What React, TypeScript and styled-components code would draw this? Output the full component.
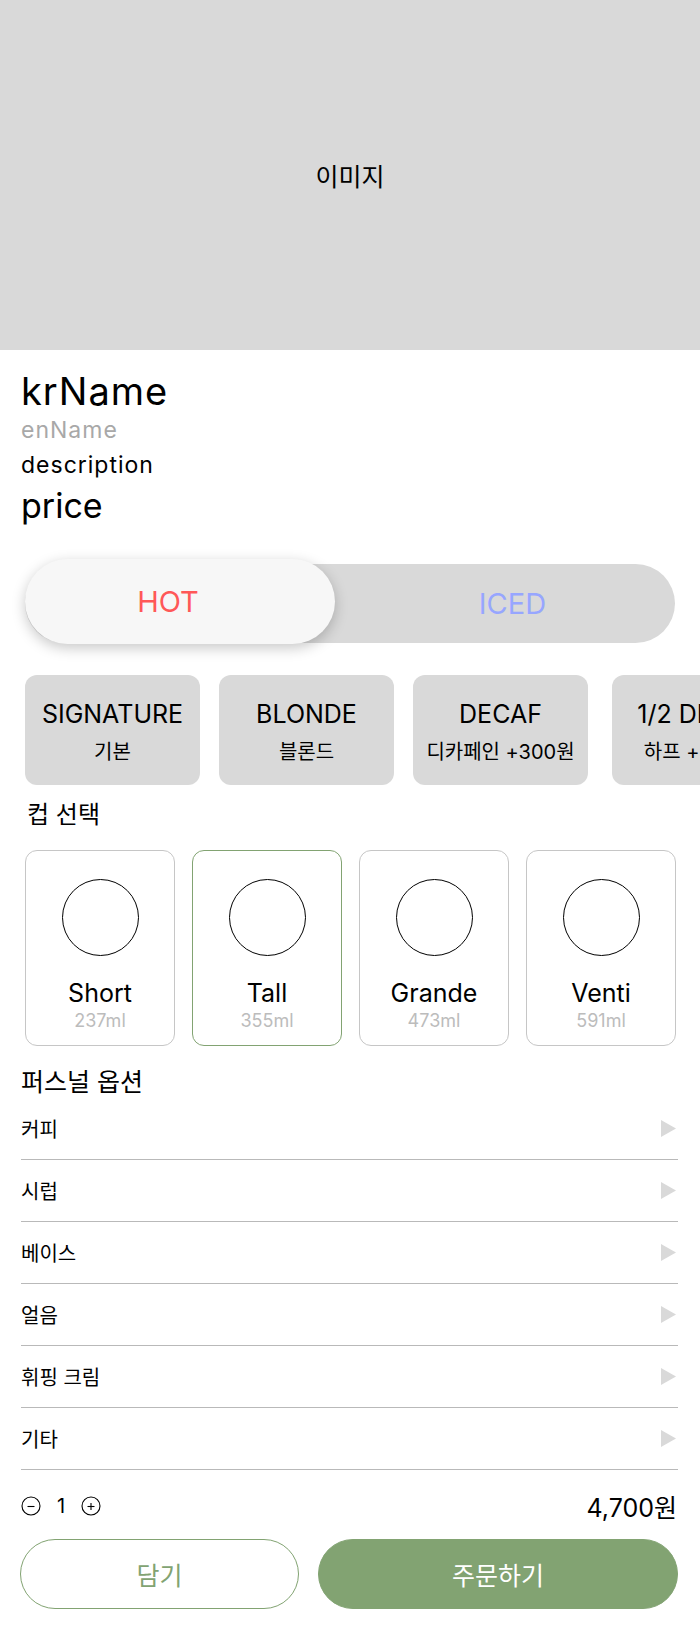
import React from 'react';
import styled, { createGlobalStyle } from 'styled-components';

const GlobalStyle = createGlobalStyle`
  html, body { margin: 0; padding: 0; background: #fff; }
  body {
    font-family: Inter, "Noto Sans CJK KR", sans-serif;
    color: #000;
  }
  * { box-sizing: border-box; }
`;

const Page = styled.div`
  width: 700px;
  padding-bottom: 20px;
  overflow: hidden;
`;

const Hero = styled.div`
  height: 350px;
  background: #d9d9d9;
  display: flex;
  align-items: center;
  justify-content: center;
  font-size: 25px;
`;

const Info = styled.section`
  padding: 19px 21px 0;
  display: flex;
  flex-direction: column;
`;

const KrName = styled.h1`
  margin: 0;
  font-size: 38px;
  font-weight: 400;
  line-height: 44px;
  letter-spacing: 1px;
`;

const EnName = styled.div`
  margin-top: 4px;
  font-size: 23px;
  line-height: 26px;
  letter-spacing: 1px;
  color: #a8a8a8;
`;

const Description = styled.p`
  margin: 9px 0 0;
  font-size: 23px;
  line-height: 26px;
  letter-spacing: 1px;
`;

const Price = styled.div`
  margin-top: 8px;
  font-size: 34px;
  line-height: 40px;
`;

const ToggleWrap = styled.div`
  margin: 33px 25px 0;
  padding-top: 5px;
`;

const Track = styled.div`
  position: relative;
  height: 79px;
  border-radius: 40px;
  background: #d9d9d9;
  display: grid;
  grid-template-columns: 1fr 1fr;
  align-items: center;
`;

const TrackLabel = styled.span<{ $color: string }>`
  grid-column: 2;
  text-align: center;
  font-size: 29px;
  color: ${(p) => p.$color};
`;

const Knob = styled.div`
  position: absolute;
  left: 0;
  top: -5px;
  width: 310px;
  height: 85px;
  border-radius: 43px;
  background: #f7f7f7;
  box-shadow: 0 4px 14px rgba(0, 0, 0, 0.22);
  display: flex;
  align-items: center;
  justify-content: center;
  padding-right: 24px;
  font-size: 29px;
  color: #ff5858;
`;

const BeanRow = styled.div`
  margin-top: 32px;
  padding-left: 25px;
  display: flex;
  gap: 19px;
`;

const Bean = styled.div<{ $shift?: number }>`
  flex: 0 0 175px;
  height: 110px;
  margin-left: ${(p) => p.$shift ?? 0}px;
  padding-top: 4px;
  border-radius: 12px;
  background: #d9d9d9;
  display: flex;
  flex-direction: column;
  align-items: center;
  justify-content: center;
  gap: 12px;
  white-space: nowrap;
`;

const BeanTitle = styled.span`
  font-size: 25px;
  line-height: 28px;
`;

const BeanSub = styled.span`
  font-size: 20px;
  line-height: 24px;
`;

const SectionTitle = styled.h2<{ $indent: number; $top: number; $size: number }>`
  margin: ${(p) => p.$top}px 0 0 ${(p) => p.$indent}px;
  font-size: ${(p) => p.$size}px;
  font-weight: 400;
  line-height: 26px;
`;

const CupGrid = styled.div`
  margin: 22px 24px 0 25px;
  display: grid;
  grid-template-columns: repeat(4, 150px);
  gap: 17px;
`;

const Cup = styled.div<{ $selected?: boolean }>`
  height: 196px;
  border: 1px solid ${(p) => (p.$selected ? '#82a372' : '#c6c6c6')};
  border-radius: 12px;
  padding-top: 28px;
  display: flex;
  flex-direction: column;
  align-items: center;
`;

const CupCircle = styled.div`
  width: 77px;
  height: 77px;
  border: 1px solid #000;
  border-radius: 50%;
`;

const CupName = styled.span`
  margin-top: 23px;
  font-size: 25px;
  line-height: 28px;
`;

const CupVolume = styled.span`
  margin-top: 3px;
  font-size: 18px;
  line-height: 22px;
  color: #bcbcbc;
`;

const OptionList = styled.ul`
  list-style: none;
  margin: 3px 22px 0 21px;
  padding: 0;
`;

const OptionRow = styled.li`
  height: 62px;
  border-bottom: 1px solid #b9b9b9;
  display: flex;
  align-items: center;
  justify-content: space-between;
  padding-right: 2px;
  font-size: 20px;
`;

const QtyRow = styled.div`
  margin: 21px 23px 0 21px;
  height: 30px;
  display: flex;
  align-items: center;
  justify-content: space-between;
`;

const Stepper = styled.div`
  display: flex;
  align-items: center;
  gap: 16px;
  font-size: 20px;
`;

const Total = styled.span`
  font-size: 25px;
`;

const Actions = styled.div`
  margin: 18px 22px 0 20px;
  display: grid;
  grid-template-columns: 279px 1fr;
  gap: 19px;
`;

const ActionButton = styled.button<{ $primary?: boolean }>`
  height: 70px;
  border-radius: 35px;
  border: 1px solid #82a372;
  background: ${(p) => (p.$primary ? '#82a372' : '#fff')};
  color: ${(p) => (p.$primary ? '#fff' : '#82a372')};
  font-family: inherit;
  font-size: 25px;
  cursor: pointer;
`;

const Triangle = () => (
  <svg width="15" height="17" viewBox="0 0 15 17" aria-hidden>
    <polygon points="0,0 15,8.5 0,17" fill="#d9d9d9" />
  </svg>
);

const RoundIcon = ({ plus }: { plus?: boolean }) => (
  <svg width="20" height="20" viewBox="0 0 20 20" aria-hidden>
    <circle cx="10" cy="10" r="9" fill="none" stroke="#000" strokeWidth="1.1" />
    <line x1="6.5" y1="10.5" x2="13.5" y2="10.5" stroke="#000" strokeWidth="1.1" />
    {plus && <line x1="10" y1="7" x2="10" y2="14" stroke="#000" strokeWidth="1.1" />}
  </svg>
);

const beans = [
  { en: 'SIGNATURE', kr: '기본' },
  { en: 'BLONDE', kr: '블론드' },
  { en: 'DECAF', kr: '디카페인 +300원' },
  { en: '1/2 DECAF', kr: '하프 +300원', shift: 5 },
];

const cups = [
  { name: 'Short', ml: '237ml' },
  { name: 'Tall', ml: '355ml', selected: true },
  { name: 'Grande', ml: '473ml' },
  { name: 'Venti', ml: '591ml' },
];

const options = ['커피', '시럽', '베이스', '얼음', '휘핑 크림', '기타'];

export default function App() {
  return (
    <Page>
      <GlobalStyle />
      <Hero>이미지</Hero>
      <Info>
        <KrName>krName</KrName>
        <EnName>enName</EnName>
        <Description>description</Description>
        <Price>price</Price>
      </Info>

      <ToggleWrap>
        <Track>
          <Knob>HOT</Knob>
          <TrackLabel $color="#97a6ff">ICED</TrackLabel>
        </Track>
      </ToggleWrap>

      <BeanRow>
        {beans.map((b) => (
          <Bean key={b.en} $shift={b.shift}>
            <BeanTitle>{b.en}</BeanTitle>
            <BeanSub>{b.kr}</BeanSub>
          </Bean>
        ))}
      </BeanRow>

      <SectionTitle $indent={27} $top={17} $size={24}>컵 선택</SectionTitle>
      <CupGrid>
        {cups.map((c) => (
          <Cup key={c.name} $selected={c.selected}>
            <CupCircle />
            <CupName>{c.name}</CupName>
            <CupVolume>{c.ml}</CupVolume>
          </Cup>
        ))}
      </CupGrid>

      <SectionTitle $indent={21} $top={23} $size={25}>퍼스널 옵션</SectionTitle>
      <OptionList>
        {options.map((o) => (
          <OptionRow key={o}>
            <span>{o}</span>
            <Triangle />
          </OptionRow>
        ))}
      </OptionList>

      <QtyRow>
        <Stepper>
          <RoundIcon />
          <span>1</span>
          <RoundIcon plus />
        </Stepper>
        <Total>4,700원</Total>
      </QtyRow>

      <Actions>
        <ActionButton>담기</ActionButton>
        <ActionButton $primary>주문하기</ActionButton>
      </Actions>
    </Page>
  );
}
